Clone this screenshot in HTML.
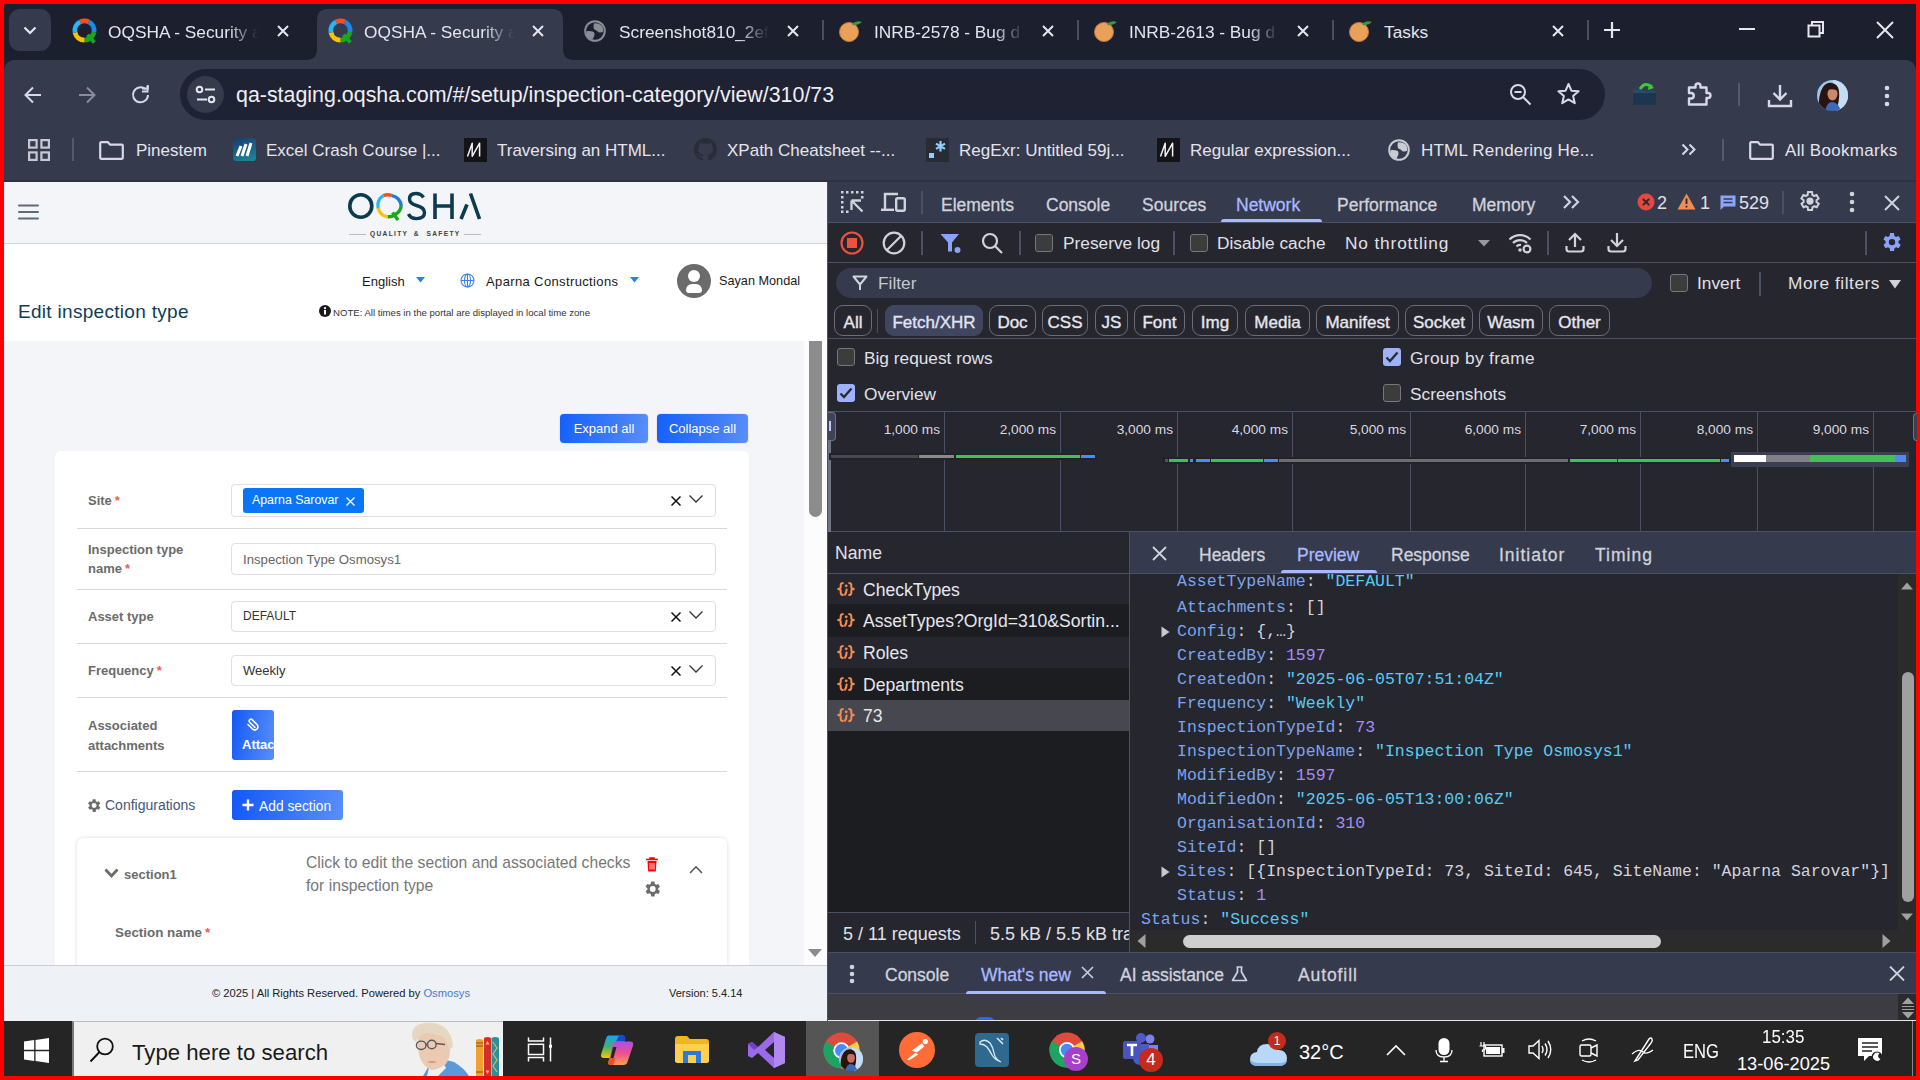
<!DOCTYPE html>
<html><head><meta charset="utf-8">
<style>
*{margin:0;padding:0;box-sizing:border-box}
html,body{width:1920px;height:1080px;overflow:hidden;background:#ff0000;font-family:"Liberation Sans",sans-serif}
.a{position:absolute}
.nw{white-space:nowrap}
#tabs{left:4px;top:4px;width:1912px;height:70px;background:#1c1f2e}
#toolbar{left:4px;top:60px;width:1912px;height:120px;background:#363a4d;border-radius:10px 10px 0 0}
.tt{color:#e4e4ec;font-size:17.3px;top:22px}
.fade{-webkit-mask-image:linear-gradient(to right,#000 80%,transparent 100%)}
.bm{color:#e4e4ec;font-size:17px;top:140.5px}
.btn{border-radius:4px;background:linear-gradient(100deg,#1560fb 0%,#3d7af9 60%,#5b8ff8 100%);color:#fff;font-size:13px;text-align:center;line-height:29px;box-shadow:0 0 1px rgba(0,0,0,.4)}
.lbl{font-size:13px;font-weight:bold;color:#6b6b6b;white-space:nowrap}
.req{color:#f05a5a;margin-left:3px}
.inp{border:1px solid #dde1e6;border-radius:4px;background:#fff}
.hr{left:77px;width:650px;height:1px;background:#d5d8dc}
.dt{color:#e0e0e8;font-size:17.3px}
.dtab{top:195px;font-size:17.5px;color:#d0d2dc;-webkit-text-stroke:0.3px currentColor}
.chip{top:305px;height:31px;border:1px solid #6a6c76;border-radius:9px;color:#e6e6ee;font-size:17px;text-align:center;line-height:33px;-webkit-text-stroke:0.35px currentColor}
.tl{top:421.5px;font-size:13.7px;color:#d8d8e0}
.mono{font-family:"Liberation Mono",monospace;font-size:16.5px;line-height:22px}
.k{color:#7ca4ec}.s{color:#5ccaf2}.n{color:#a68cf2}.p{color:#d4d4dc}
.tg{top:230.3px;font-size:6.6px;font-weight:bold;letter-spacing:1.34px;color:#404040}
</style></head>
<body>
<!-- ============ TAB STRIP ============ -->
<div id="tabs" class="a"></div>
<div id="toolbar" class="a"></div>

<!-- tab search button -->
<div class="a" style="left:9px;top:9px;width:42px;height:42px;border-radius:11px;background:#363a4d"></div>
<svg class="a" style="left:22px;top:22px" width="16" height="16" viewBox="0 0 16 16"><path d="M2.5 5.5 L8 11 L13.5 5.5" fill="none" stroke="#e6e6ee" stroke-width="2.2"/></svg>
<!-- active tab shape -->
<svg class="a" style="left:306px;top:9px" width="268" height="51" viewBox="0 0 268 51"><path d="M0 51 Q11 51 11 40 L11 11 Q11 0 22 0 L246 0 Q257 0 257 11 L257 40 Q257 51 268 51 Z" fill="#363a4d"/></svg>
<!-- favicons -->
<svg class="a" style="left:72px;top:18px;overflow:visible" width="25" height="25" viewBox="0 0 24 24">
 <g fill="none" stroke-width="4.6">
  <path d="M7.8 3.8 A9.3 9.3 0 0 1 16.2 3.8" stroke="#f4511e"/>
  <path d="M16.2 3.8 A9.3 9.3 0 0 1 21.1 13.5" stroke="#1e88e5"/>
  <path d="M21.1 13.5 A9.3 9.3 0 0 1 12 21.3" stroke="#1aa81a"/>
  <path d="M12 21.3 A9.3 9.3 0 0 1 2.9 14" stroke="#ffc107"/>
  <path d="M2.9 14 A9.3 9.3 0 0 1 7.8 3.8" stroke="#29b6f6"/>
 </g>
 <path d="M15 16 L21.5 23.5" stroke="#1aa81a" stroke-width="3.6"/>
</svg>
<svg class="a" style="left:328px;top:18px;overflow:visible" width="25" height="25" viewBox="0 0 24 24">
 <g fill="none" stroke-width="4.6">
  <path d="M7.8 3.8 A9.3 9.3 0 0 1 16.2 3.8" stroke="#f4511e"/>
  <path d="M16.2 3.8 A9.3 9.3 0 0 1 21.1 13.5" stroke="#1e88e5"/>
  <path d="M21.1 13.5 A9.3 9.3 0 0 1 12 21.3" stroke="#1aa81a"/>
  <path d="M12 21.3 A9.3 9.3 0 0 1 2.9 14" stroke="#ffc107"/>
  <path d="M2.9 14 A9.3 9.3 0 0 1 7.8 3.8" stroke="#29b6f6"/>
 </g>
 <path d="M15 16 L21.5 23.5" stroke="#1aa81a" stroke-width="3.6"/>
</svg>
<svg class="a" style="left:584px;top:20px" width="22" height="22" viewBox="0 0 22 22"><circle cx="11" cy="11" r="9.8" fill="none" stroke="#8a8c96" stroke-width="2"/><path d="M10 3.2Q14.5 2.8 17.5 5.2Q19.8 8 19.3 11.5Q17.2 12.8 14.5 12.2Q12.5 10.5 10.5 9.6Q8.8 7.5 10 3.2Z" fill="#8a8c96"/><path d="M2.4 11.2Q6.5 10.8 9.8 12Q11.2 14 10.2 16.3Q9 17.5 8.8 19.6Q4.3 18.6 2.6 15.2Z" fill="#8a8c96"/></svg>
<svg class="a" style="left:838px;top:19px" width="26" height="24" viewBox="0 0 26 24"><circle cx="11" cy="13" r="9.5" fill="#e8a05a"/><circle cx="11" cy="13" r="9.5" fill="none" stroke="#c77a35" stroke-width="1"/><path d="M14 5 Q18 1 24 3 Q20 7 15 6 Z" fill="#3a9a3a"/></svg><svg class="a" style="left:1093px;top:19px" width="26" height="24" viewBox="0 0 26 24"><circle cx="11" cy="13" r="9.5" fill="#e8a05a"/><circle cx="11" cy="13" r="9.5" fill="none" stroke="#c77a35" stroke-width="1"/><path d="M14 5 Q18 1 24 3 Q20 7 15 6 Z" fill="#3a9a3a"/></svg><svg class="a" style="left:1348px;top:19px" width="26" height="24" viewBox="0 0 26 24"><circle cx="11" cy="13" r="9.5" fill="#e8a05a"/><circle cx="11" cy="13" r="9.5" fill="none" stroke="#c77a35" stroke-width="1"/><path d="M14 5 Q18 1 24 3 Q20 7 15 6 Z" fill="#3a9a3a"/></svg><div class="a nw tt fade" style="left:108px;width:150px;overflow:hidden">OQSHA - Security a</div>
<div class="a nw tt fade" style="left:364px;width:150px;overflow:hidden">OQSHA - Security a</div>
<div class="a nw tt fade" style="left:619px;width:150px;overflow:hidden">Screenshot810_2ef</div>
<div class="a nw tt fade" style="left:874px;width:150px;overflow:hidden">INRB-2578 - Bug d</div>
<div class="a nw tt fade" style="left:1129px;width:150px;overflow:hidden">INRB-2613 - Bug d</div>
<div class="a nw tt" style="left:1384px;width:150px;overflow:hidden">Tasks</div>
<svg class="a" style="left:276px;top:24px" width="14" height="14" viewBox="0 0 14 14"><path d="M2 2L12 12M12 2L2 12" stroke="#e6e6ee" stroke-width="2"/></svg>
<svg class="a" style="left:531px;top:24px" width="14" height="14" viewBox="0 0 14 14"><path d="M2 2L12 12M12 2L2 12" stroke="#e6e6ee" stroke-width="2"/></svg>
<svg class="a" style="left:786px;top:24px" width="14" height="14" viewBox="0 0 14 14"><path d="M2 2L12 12M12 2L2 12" stroke="#e6e6ee" stroke-width="2"/></svg>
<svg class="a" style="left:1041px;top:24px" width="14" height="14" viewBox="0 0 14 14"><path d="M2 2L12 12M12 2L2 12" stroke="#e6e6ee" stroke-width="2"/></svg>
<svg class="a" style="left:1296px;top:24px" width="14" height="14" viewBox="0 0 14 14"><path d="M2 2L12 12M12 2L2 12" stroke="#e6e6ee" stroke-width="2"/></svg>
<svg class="a" style="left:1551px;top:24px" width="14" height="14" viewBox="0 0 14 14"><path d="M2 2L12 12M12 2L2 12" stroke="#e6e6ee" stroke-width="2"/></svg>
<div class="a" style="left:822px;top:20px;width:2px;height:20px;background:#4a4e60"></div>
<div class="a" style="left:1077px;top:20px;width:2px;height:20px;background:#4a4e60"></div>
<div class="a" style="left:1332px;top:20px;width:2px;height:20px;background:#4a4e60"></div>
<div class="a" style="left:1587px;top:20px;width:2px;height:20px;background:#4a4e60"></div>

<svg class="a" style="left:1602px;top:20px" width="20" height="20" viewBox="0 0 20 20"><path d="M10 2V18M2 10H18" stroke="#e6e6ee" stroke-width="2.2"/></svg>
<div class="a" style="left:1739px;top:28px;width:16px;height:2px;background:#e6e6ee"></div>
<svg class="a" style="left:1807px;top:20px" width="18" height="18" viewBox="0 0 18 18"><rect x="1.5" y="5.5" width="11" height="11" fill="none" stroke="#e6e6ee" stroke-width="2"/><path d="M5 5V2H16V13H13" fill="none" stroke="#e6e6ee" stroke-width="2"/></svg>
<svg class="a" style="left:1876px;top:21px" width="18" height="18" viewBox="0 0 18 18"><path d="M1 1L17 17M17 1L1 17" stroke="#e6e6ee" stroke-width="2"/></svg>


<!-- ======= TOOLBAR ======= -->
<svg class="a" style="left:23px;top:85px" width="20" height="20" viewBox="0 0 20 20"><path d="M18 10H3M10 2.5L2.5 10L10 17.5" fill="none" stroke="#d8d8e8" stroke-width="2"/></svg>
<svg class="a" style="left:77px;top:85px" width="20" height="20" viewBox="0 0 20 20"><path d="M2 10H17M10 2.5L17.5 10L10 17.5" fill="none" stroke="#8a8c9a" stroke-width="2"/></svg>
<svg class="a" style="left:131px;top:85px" width="20" height="20" viewBox="0 0 20 20"><path d="M17 10A7.5 7.5 0 1 1 14.5 4.2" fill="none" stroke="#d8d8e8" stroke-width="2"/><path d="M11 3.5H16.8V-1.5" fill="none" stroke="#d8d8e8" stroke-width="2"/><path d="M16.5 1V6.5H11" fill="none" stroke="#d8d8e8" stroke-width="2"/></svg>
<div class="a" style="left:180px;top:69px;width:1425px;height:51px;border-radius:26px;background:#1f2233"></div>
<div class="a" style="left:187px;top:76px;width:37px;height:37px;border-radius:50%;background:#363a4d"></div>
<svg class="a" style="left:195px;top:85px" width="22" height="20" viewBox="0 0 22 20"><circle cx="4.5" cy="4.5" r="2.8" fill="none" stroke="#e6e6ee" stroke-width="2"/><path d="M10 4.5H20M2 14.5H12" stroke="#e6e6ee" stroke-width="2"/><circle cx="16.5" cy="14.5" r="2.8" fill="none" stroke="#e6e6ee" stroke-width="2"/></svg>
<div class="a nw" style="left:236px;top:82.5px;font-size:21.4px;color:#eeeef4">qa-staging.oqsha.com/#/setup/inspection-category/view/310/73</div>
<svg class="a" style="left:1509px;top:83px" width="24" height="24" viewBox="0 0 24 24"><circle cx="9" cy="9" r="7" fill="none" stroke="#d8d8e8" stroke-width="2"/><path d="M5.5 9H12.5M14 14L21.5 21.5" stroke="#d8d8e8" stroke-width="2"/></svg>
<svg class="a" style="left:1556px;top:82px" width="25" height="24" viewBox="0 0 25 24"><path d="M12.5 2L15.4 8.7L22.6 9.3L17.1 14.1L18.8 21.2L12.5 17.4L6.2 21.2L7.9 14.1L2.4 9.3L9.6 8.7Z" fill="none" stroke="#d8d8e8" stroke-width="2" stroke-linejoin="round"/></svg>
<svg class="a" style="left:1631px;top:81px" width="27" height="26" viewBox="0 0 27 26"><path d="M2 8H10L12 10H24V24H2Z" fill="#2b4a6b"/><path d="M2 12H25V24H2Z" fill="#1e3550"/><path d="M9 8Q14 0 21 6" fill="none" stroke="#3cc83c" stroke-width="3"/><path d="M18 3L23 7L17 9Z" fill="#3cc83c"/></svg>
<svg class="a" style="left:1686px;top:81px" width="28" height="26" viewBox="0 0 28 26"><path d="M3 6.5H9.5V5A2.5 2.5 0 0 1 14.5 5V6.5H20.5V12H22A2.5 2.5 0 0 1 22 17H20.5V23.5H3V17.5H5.5A2.8 2.8 0 0 0 5.5 12H3Z" fill="none" stroke="#d8d8e8" stroke-width="2.4" stroke-linejoin="round"/></svg>
<div class="a" style="left:1738px;top:83px;width:2px;height:23px;background:#555a6c"></div>
<svg class="a" style="left:1767px;top:83px" width="26" height="25" viewBox="0 0 26 25"><path d="M13 2V16M6.5 10L13 16.5L19.5 10" fill="none" stroke="#d8d8e8" stroke-width="2.4"/><path d="M2 17V23H24V17" fill="none" stroke="#d8d8e8" stroke-width="2.4"/></svg>
<svg class="a" style="left:1817px;top:80px" width="31" height="31" viewBox="0 0 31 31"><defs><clipPath id="avc"><circle cx="15.5" cy="15.5" r="15.5"/></clipPath></defs><g clip-path="url(#avc)"><rect width="31" height="31" fill="#9ec4ec"/><path d="M16 0H31V31H20Z" fill="#c4dcf4"/><path d="M2 31Q1 14 6 7Q10 2 15 3Q21 4 22 11Q23 20 19 31Z" fill="#2a1410"/><ellipse cx="15.5" cy="14" rx="5" ry="6.5" fill="#c88a6a"/><path d="M10 10Q13 5 18 6Q21 8 21 11Q17 8 10 10Z" fill="#2a1410"/><path d="M8 31Q10 22 15 22Q21 22 24 31Z" fill="#3a6ab8"/></g></svg>
<svg class="a" style="left:1882px;top:84px" width="10" height="24" viewBox="0 0 10 24"><circle cx="5" cy="4" r="2.3" fill="#d8d8e8"/><circle cx="5" cy="12" r="2.3" fill="#d8d8e8"/><circle cx="5" cy="20" r="2.3" fill="#d8d8e8"/></svg>
<!-- ======= BOOKMARKS ======= -->
<svg class="a" style="left:28px;top:139px" width="22" height="22" viewBox="0 0 22 22"><g fill="none" stroke="#c8c8d4" stroke-width="2.2"><rect x="1.1" y="1.1" width="7.5" height="7.5"/><rect x="13.4" y="1.1" width="7.5" height="7.5"/><rect x="1.1" y="13.4" width="7.5" height="7.5"/><rect x="13.4" y="13.4" width="7.5" height="7.5"/></g></svg>
<div class="a" style="left:72px;top:138px;width:2px;height:23px;background:#555a6c"></div>
<svg class="a" style="left:99px;top:141px" width="25" height="19" viewBox="0 0 25 19"><path d="M1.2 2.2A1 1 0 0 1 2.2 1.2H9L11 3.6H22.8A1 1 0 0 1 23.8 4.6V16.8A1 1 0 0 1 22.8 17.8H2.2A1 1 0 0 1 1.2 16.8Z" fill="none" stroke="#d8d8e8" stroke-width="2.2" stroke-linejoin="round"/></svg>
<div class="a nw bm" style="left:136px">Pinestem</div>
<div class="a" style="left:233px;top:138px;width:23px;height:23px;border-radius:3px;background:linear-gradient(160deg,#1a3a6a,#1a8aa0)"></div><svg class="a" style="left:233px;top:138px" width="23" height="23" viewBox="0 0 23 23"><path d="M4 18L8 8M9 18L13 6M14 18L18 5" stroke="#fff" stroke-width="3"/></svg>
<div class="a nw bm" style="left:266px">Excel Crash Course |...</div>
<svg class="a" style="left:464px;top:138px" width="23" height="24" viewBox="0 0 23 24"><rect width="23" height="24" fill="#141418"/><path d="M3.5 18.5L8.2 5.2V18.3L15.6 5.2V18.5" fill="none" stroke="#f2f2f2" stroke-width="1.5" stroke-linejoin="round"/></svg>
<div class="a nw bm" style="left:497px">Traversing an HTML...</div>
<svg class="a" style="left:694px;top:138px" width="23" height="23" viewBox="0 0 16 16"><path fill="#2a2d38" d="M8 0C3.58 0 0 3.58 0 8c0 3.54 2.29 6.53 5.47 7.59.4.07.55-.17.55-.38 0-.19-.01-.82-.01-1.49-2.01.37-2.53-.49-2.69-.94-.09-.23-.48-.94-.82-1.13-.28-.15-.68-.52-.01-.53.63-.01 1.08.58 1.23.82.72 1.21 1.87.87 2.33.66.07-.52.28-.87.51-1.07-1.78-.2-3.64-.89-3.64-3.95 0-.87.31-1.59.82-2.15-.08-.2-.36-1.02.08-2.12 0 0 .67-.21 2.2.82.64-.18 1.32-.27 2-.27.68 0 1.36.09 2 .27 1.53-1.04 2.2-.82 2.2-.82.44 1.1.16 1.92.08 2.12.51.56.82 1.27.82 2.15 0 3.07-1.87 3.75-3.65 3.95.29.25.54.73.54 1.48 0 1.07-.01 1.93-.01 2.2 0 .21.15.46.55.38A8.013 8.013 0 0016 8c0-4.42-3.58-8-8-8z"/></svg>
<div class="a nw bm" style="left:727px">XPath Cheatsheet --...</div>
<svg class="a" style="left:926px;top:138px" width="23" height="24" viewBox="0 0 23 24"><rect width="23" height="24" fill="#282c34"/><rect x="3" y="15" width="5" height="5" fill="#90d0ff"/><path d="M14.5 3V13.5M10 5.6L19 10.9M19 5.6L10 10.9" stroke="#90d0ff" stroke-width="2.2"/></svg>
<div class="a nw bm" style="left:959px">RegExr: Untitled 59j...</div>
<svg class="a" style="left:1157px;top:138px" width="23" height="24" viewBox="0 0 23 24"><rect width="23" height="24" fill="#141418"/><path d="M3.5 18.5L8.2 5.2V18.3L15.6 5.2V18.5" fill="none" stroke="#f2f2f2" stroke-width="1.5" stroke-linejoin="round"/></svg>
<div class="a nw bm" style="left:1190px">Regular expression...</div>
<svg class="a" style="left:1388px;top:139px" width="22" height="22" viewBox="0 0 22 22"><circle cx="11" cy="11" r="9.8" fill="none" stroke="#c8ccd4" stroke-width="2"/><path d="M10 3.2Q14.5 2.8 17.5 5.2Q19.8 8 19.3 11.5Q17.2 12.8 14.5 12.2Q12.5 10.5 10.5 9.6Q8.8 7.5 10 3.2Z" fill="#c8ccd4"/><path d="M2.4 11.2Q6.5 10.8 9.8 12Q11.2 14 10.2 16.3Q9 17.5 8.8 19.6Q4.3 18.6 2.6 15.2Z" fill="#c8ccd4"/></svg>
<div class="a nw bm" style="left:1421px;letter-spacing:0.2px">HTML Rendering He...</div>
<svg class="a" style="left:1681px;top:143px" width="16" height="13" viewBox="0 0 16 13"><path d="M1.5 1.5L6.5 6.5L1.5 11.5M8.5 1.5L13.5 6.5L8.5 11.5" fill="none" stroke="#d8d8e8" stroke-width="2"/></svg>
<div class="a" style="left:1722px;top:139px;width:2px;height:22px;background:#555a6c"></div>
<svg class="a" style="left:1749px;top:141px" width="25" height="19" viewBox="0 0 25 19"><path d="M1.2 2.2A1 1 0 0 1 2.2 1.2H9L11 3.6H22.8A1 1 0 0 1 23.8 4.6V16.8A1 1 0 0 1 22.8 17.8H2.2A1 1 0 0 1 1.2 16.8Z" fill="none" stroke="#d8d8e8" stroke-width="2.2" stroke-linejoin="round"/></svg>
<div class="a nw bm" style="left:1785px;letter-spacing:0.3px">All Bookmarks</div>
<div class="a" style="left:4px;top:180px;width:1912px;height:2px;background:#2e3142"></div>

<!-- ============ APP ============ -->
<div id="app" class="a" style="left:4px;top:182px;width:823px;height:839px;background:#f3f5f9;overflow:hidden">
</div>
<!-- app content in page coords -->
<div class="a" style="left:4px;top:243px;width:823px;height:1px;background:#cfd5dc"></div>
<div class="a" style="left:4px;top:244px;width:823px;height:97px;background:#fff"></div>
<svg class="a" style="left:18px;top:204px" width="21" height="16" viewBox="0 0 21 16"><path d="M1 1.5H20M1 8H20M1 14.5H20" stroke="#5f6b78" stroke-width="2" stroke-linecap="round"/></svg>
<!-- logo -->
<svg class="a" style="left:346px;top:190px" width="138" height="34" viewBox="0 0 138 34">
 <ellipse cx="14.8" cy="16" rx="11" ry="11.2" fill="none" stroke="#0c3a4e" stroke-width="3.6"/>
 <g fill="none" stroke-width="3.4">
  <path d="M37.3 5.6 A11.2 11.2 0 0 1 46 5.6" stroke="#f4511e"/>
  <path d="M46 5.6 A11.2 11.2 0 0 1 55.2 16" stroke="#1e7be0"/>
  <path d="M55.2 16 A11.2 11.2 0 0 1 49 24.6" stroke="#18a818"/>
  <path d="M49 24.6 A11.2 11.2 0 0 1 41.6 26.8" stroke="#18a818"/>
  <path d="M41.6 26.8 A11.2 11.2 0 0 1 32.2 18" stroke="#ffc107"/>
  <path d="M32.2 18 A11.2 11.2 0 0 1 37.3 5.6" stroke="#29b6f6"/>
 </g>
 <path d="M46.5 22.5 L52 30" stroke="#18a818" stroke-width="3.4"/>
 <path d="M77.5 7.5 Q75 3.5 70 3.5 Q63.5 3.5 63.5 9 Q63.5 13.5 70.5 15.5 Q78.5 17.5 78.5 22.5 Q78.5 28.6 70.5 28.6 Q64.5 28.6 62.5 24" fill="none" stroke="#0c3a4e" stroke-width="3.4"/>
 <path d="M89 3.5V29M106 3.5V29M89 16H106" stroke="#0c3a4e" stroke-width="3.6"/>
 <path d="M124.5 3.5L133.5 29" stroke="#0c3a4e" stroke-width="3.6"/>
 <path d="M121 14.5L115 29" stroke="#0c3a4e" stroke-width="3.6"/>
</svg>
<div class="a" style="left:349px;top:234px;width:17px;height:1px;background:#b8bcc2"></div>
<div class="a" style="left:464px;top:234px;width:17px;height:1px;background:#b8bcc2"></div>
<div class="a nw tg" style="left:370px">QUALITY</div><div class="a nw tg" style="left:413.7px">&amp;</div><div class="a nw tg" style="left:426.5px">SAFETY</div>
<!-- header right -->
<div class="a nw" style="left:362px;top:274px;font-size:13px;color:#1a1a1a">English</div>
<svg class="a" style="left:416px;top:277px" width="9" height="6" viewBox="0 0 9 6"><path d="M0 0H9L4.5 5.5Z" fill="#2a80e8"/></svg>
<svg class="a" style="left:460px;top:273px" width="15" height="15" viewBox="0 0 15 15"><g fill="none" stroke="#3b82e8" stroke-width="1.1"><circle cx="7.5" cy="7.5" r="6.5"/><ellipse cx="7.5" cy="7.5" rx="3" ry="6.5"/><path d="M1 7.5H14M7.5 1V14"/></g></svg>
<div class="a nw" style="left:486px;top:274px;font-size:13px;letter-spacing:0.37px;color:#1a1a1a">Aparna Constructions</div>
<svg class="a" style="left:630px;top:277px" width="9" height="6" viewBox="0 0 9 6"><path d="M0 0H9L4.5 5.5Z" fill="#2a80e8"/></svg>
<div class="a" style="left:677px;top:264px;width:34px;height:34px;border-radius:50%;background:#6b6b6b"></div>
<div class="a" style="left:688px;top:270px;width:12px;height:12px;border-radius:50%;background:#fff"></div>
<div class="a" style="left:686px;top:284px;width:16px;height:9px;border-radius:6px 6px 3px 3px;background:#fff"></div>
<div class="a nw" style="left:719px;top:273.7px;font-size:12.7px;color:#1a1a1a">Sayan Mondal</div>
<div class="a nw" style="left:18px;top:301px;font-size:19px;letter-spacing:0.3px;color:#0d3d56">Edit inspection type</div>
<svg class="a" style="left:319px;top:305px" width="12" height="12" viewBox="0 0 12 12"><circle cx="6" cy="6" r="6" fill="#1a1a1a"/><rect x="5" y="5" width="2" height="4.5" fill="#fff"/><circle cx="6" cy="3.2" r="1.1" fill="#fff"/></svg>
<div class="a nw" style="left:333px;top:307px;font-size:9.6px;color:#333">NOTE: All times in the portal are displayed in local time zone</div>
<!-- scrollbar -->
<div class="a" style="left:804px;top:341px;width:23px;height:624px;background:#fcfcfc"></div>
<div class="a" style="left:809px;top:341px;width:13px;height:176px;border-radius:0 0 7px 7px;background:#8c8c8c"></div>
<svg class="a" style="left:808px;top:949px" width="14" height="9" viewBox="0 0 14 9"><path d="M0 0H14L7 8Z" fill="#8c8c8c"/></svg>
<!-- buttons -->
<div class="a btn" style="left:560px;top:414px;width:88px;height:29px">Expand all</div>
<div class="a btn" style="left:657px;top:414px;width:91px;height:29px">Collapse all</div>
<!-- card -->
<div class="a" style="left:55px;top:451px;width:694px;height:520px;border-radius:6px;background:#fff"></div>
<div class="a lbl" style="left:88px;top:493px">Site<span class="req">*</span></div>
<div class="a inp" style="left:231px;top:484px;width:485px;height:33px"></div>
<div class="a" style="left:243px;top:488px;width:121px;height:25px;border-radius:3px;background:#0a76f6"></div>
<div class="a nw" style="left:252px;top:493px;font-size:12.35px;color:#fff">Aparna Sarovar</div>
<svg class="a" style="left:346px;top:497px" width="9" height="9" viewBox="0 0 9 9"><path d="M0.5 0.5L8.5 8.5M8.5 0.5L0.5 8.5" stroke="#fff" stroke-width="1.3"/></svg>
<svg class="a" style="left:671px;top:496px" width="10" height="10" viewBox="0 0 10 10"><path d="M0.5 0.5L9.5 9.5M9.5 0.5L0.5 9.5" stroke="#111" stroke-width="1.5"/></svg>
<svg class="a" style="left:689px;top:495px" width="14" height="8" viewBox="0 0 14 8"><path d="M0.5 0.5L7 7L13.5 0.5" fill="none" stroke="#333" stroke-width="1.3"/></svg>
<div class="a hr" style="top:528px"></div>
<div class="a lbl" style="left:88px;top:541px;line-height:18.6px">Inspection type<br>name<span class="req">*</span></div>
<div class="a inp" style="left:231px;top:543px;width:485px;height:32px"></div>
<div class="a nw" style="left:243px;top:552px;font-size:13.2px;color:#666">Inspection Type Osmosys1</div>
<div class="a hr" style="top:589px"></div>
<div class="a lbl" style="left:88px;top:609px">Asset type</div>
<div class="a inp" style="left:231px;top:601px;width:485px;height:31px"></div>
<div class="a nw" style="left:243px;top:609px;font-size:12px;color:#333">DEFAULT</div>
<svg class="a" style="left:671px;top:612px" width="10" height="10" viewBox="0 0 10 10"><path d="M0.5 0.5L9.5 9.5M9.5 0.5L0.5 9.5" stroke="#111" stroke-width="1.5"/></svg>
<svg class="a" style="left:689px;top:611px" width="14" height="8" viewBox="0 0 14 8"><path d="M0.5 0.5L7 7L13.5 0.5" fill="none" stroke="#333" stroke-width="1.3"/></svg>
<div class="a hr" style="top:643px"></div>
<div class="a lbl" style="left:88px;top:663px">Frequency<span class="req">*</span></div>
<div class="a inp" style="left:231px;top:655px;width:485px;height:31px"></div>
<div class="a nw" style="left:243px;top:663px;font-size:13px;color:#333">Weekly</div>
<svg class="a" style="left:671px;top:666px" width="10" height="10" viewBox="0 0 10 10"><path d="M0.5 0.5L9.5 9.5M9.5 0.5L0.5 9.5" stroke="#111" stroke-width="1.5"/></svg>
<svg class="a" style="left:689px;top:665px" width="14" height="8" viewBox="0 0 14 8"><path d="M0.5 0.5L7 7L13.5 0.5" fill="none" stroke="#333" stroke-width="1.3"/></svg>
<div class="a hr" style="top:697px"></div>
<div class="a lbl" style="left:88px;top:716px;line-height:20.4px">Associated<br>attachments</div>
<div class="a" style="left:232px;top:710px;width:42px;height:50px;border-radius:3px;background:linear-gradient(100deg,#1258f8,#5a8ff8);overflow:hidden">
 <svg class="a" style="left:14px;top:8px;transform:scaleX(-1)" width="13" height="13" viewBox="0 0 13 13"><path d="M4 9.5L9.5 4A1.8 1.8 0 0 0 7 1.5L2 6.5A3 3 0 0 0 6.5 11L11 6.5" fill="none" stroke="#fff" stroke-width="1.6" stroke-linecap="round"/></svg>
 <div class="a nw" style="left:10px;top:27px;font-size:13px;font-weight:bold;color:#fff">Attach</div>
</div>
<div class="a hr" style="top:771px"></div>
<svg class="a" style="left:85px;top:797px" width="17" height="17" viewBox="0 0 24 24"><path fill="#6b6b6b" d="M19.4 13a7.6 7.6 0 0 0 0-2l2.1-1.6-2-3.5-2.5 1a7.4 7.4 0 0 0-1.7-1L14.9 3h-4l-.4 2.9a7.4 7.4 0 0 0-1.7 1l-2.5-1-2 3.5L6.5 11a7.6 7.6 0 0 0 0 2l-2.1 1.6 2 3.5 2.5-1a7.4 7.4 0 0 0 1.7 1l.4 2.9h4l.4-2.9a7.4 7.4 0 0 0 1.7-1l2.5 1 2-3.5zM12.9 15.5a3.5 3.5 0 1 1 0-7 3.5 3.5 0 0 1 0 7z"/></svg>
<div class="a nw" style="left:105px;top:797px;font-size:14px;color:#44577a">Configurations</div>
<div class="a" style="left:232px;top:790px;width:111px;height:30px;border-radius:3px;background:linear-gradient(100deg,#1258f8,#5a8ff8)"></div>
<svg class="a" style="left:242px;top:799px" width="12" height="12" viewBox="0 0 12 12"><path d="M6 0.5V11.5M0.5 6H11.5" stroke="#fff" stroke-width="2.4"/></svg>
<div class="a nw" style="left:259px;top:798.5px;font-size:13.8px;color:#fff">Add section</div>
<!-- section card -->
<div class="a" style="left:77px;top:838px;width:650px;height:200px;border-radius:6px;background:#fff;box-shadow:0 0 4px rgba(0,0,0,0.14)"></div>
<svg class="a" style="left:104px;top:868px" width="15" height="11" viewBox="0 0 15 11"><path d="M1.5 1.5L7.5 8L13.5 1.5" fill="none" stroke="#6b6b6b" stroke-width="2.8"/></svg>
<div class="a nw" style="left:124px;top:867px;font-size:13px;font-weight:bold;color:#6b6b6b">section1</div>
<div class="a nw" style="left:306px;top:851px;font-size:15.7px;line-height:23px;color:#777">Click to edit the section and associated checks<br>for inspection type</div>
<svg class="a" style="left:645px;top:857px" width="14" height="15" viewBox="0 0 14 15"><path d="M1 2.5H13M5 2.5V1H9V2.5" fill="none" stroke="#f00" stroke-width="1.6"/><path d="M2.5 4H11.5L10.8 14.5H3.2Z" fill="#f00"/><path d="M5 6V12.5M7 6V12.5M9 6V12.5" stroke="#fff" stroke-width="0.9"/></svg>
<svg class="a" style="left:642px;top:879px" width="20" height="20" viewBox="0 0 24 24"><path fill="#6b6b6b" d="M19.4 13a7.6 7.6 0 0 0 0-2l2.1-1.6-2-3.5-2.5 1a7.4 7.4 0 0 0-1.7-1L14.9 3h-4l-.4 2.9a7.4 7.4 0 0 0-1.7 1l-2.5-1-2 3.5L6.5 11a7.6 7.6 0 0 0 0 2l-2.1 1.6 2 3.5 2.5-1a7.4 7.4 0 0 0 1.7 1l.4 2.9h4l.4-2.9a7.4 7.4 0 0 0 1.7-1l2.5 1 2-3.5zM12.9 15.5a3.5 3.5 0 1 1 0-7 3.5 3.5 0 0 1 0 7z"/></svg>
<svg class="a" style="left:689px;top:865px" width="14" height="9" viewBox="0 0 14 9"><path d="M1 8L7 1.8L13 8" fill="none" stroke="#555" stroke-width="1.6"/></svg>
<div class="a nw" style="left:115px;top:925px;font-size:13.4px;font-weight:bold;color:#6b6b6b">Section name<span class="req">*</span></div>
<!-- footer -->
<div class="a" style="left:4px;top:965px;width:823px;height:56px;background:#eef1f5;border-top:1px solid #c9d0d8"></div>
<div class="a nw" style="left:212px;top:987px;font-size:11.2px;color:#222">© 2025 | All Rights Reserved. Powered by <span style="color:#4a7ad0">Osmosys</span></div>
<div class="a nw" style="left:669px;top:987px;font-size:11px;color:#222">Version: 5.4.14</div>


<!-- ============ DEVTOOLS ============ -->
<div id="dt" class="a" style="left:827px;top:182px;width:1089px;height:839px;background:#26262e;overflow:hidden"></div>
<div class="a" style="left:827px;top:182px;width:1px;height:839px;background:#4a4f62"></div>
<div class="a" style="left:828px;top:182px;width:1088px;height:40px;background:#353a4d"></div>
<div class="a" style="left:828px;top:222px;width:1088px;height:1px;background:#4b5066"></div>
<div class="a" style="left:828px;top:223px;width:1088px;height:39px;background:#26262e"></div>
<div class="a" style="left:828px;top:262px;width:1088px;height:1px;background:#4b5066"></div>
<div class="a" style="left:828px;top:263px;width:1088px;height:75px;background:#26262e"></div>
<div class="a" style="left:828px;top:338px;width:1088px;height:1px;background:#4b5066"></div>
<div class="a" style="left:828px;top:339px;width:1088px;height:72px;background:#26262e"></div>
<div class="a" style="left:828px;top:411px;width:1088px;height:1px;background:#4b5066"></div>
<div class="a" style="left:828px;top:412px;width:1088px;height:120px;background:#26262e"></div>
<div class="a" style="left:828px;top:531px;width:1088px;height:1px;background:#4b5066"></div>
<svg class="a" style="left:841px;top:191px" width="23" height="22" viewBox="0 0 23 22"><g fill="#d0d2dc"><rect x="0" y="0" width="2.5" height="2.5"/><rect x="5" y="0" width="2.5" height="2.5"/><rect x="10" y="0" width="2.5" height="2.5"/><rect x="15" y="0" width="2.5" height="2.5"/><rect x="20" y="0" width="2.5" height="2.5"/><rect x="0" y="5" width="2.5" height="2.5"/><rect x="20" y="5" width="2.5" height="2.5"/><rect x="0" y="10" width="2.5" height="2.5"/><rect x="0" y="15" width="2.5" height="2.5"/><rect x="0" y="19.5" width="2.5" height="2.5"/><rect x="5" y="19.5" width="2.5" height="2.5"/></g><path d="M21.5 20.5L11 10M10.5 9.5V19M10.5 9.5H20" fill="none" stroke="#d0d2dc" stroke-width="2.3"/></svg>
<svg class="a" style="left:881px;top:192px" width="26" height="20" viewBox="0 0 26 20"><path d="M4 17V2H17" fill="none" stroke="#d0d2dc" stroke-width="2.4"/><path d="M0 17.8H13" stroke="#d0d2dc" stroke-width="2.4"/><rect x="15.2" y="6.2" width="8.6" height="12.6" rx="1.5" fill="none" stroke="#d0d2dc" stroke-width="2.4"/></svg>
<div class="a" style="left:921px;top:191px;width:2px;height:23px;background:#4b5066"></div>
<div class="a nw dtab" style="left:941px;color:#d0d2dc">Elements</div>
<div class="a nw dtab" style="left:1046px;color:#d0d2dc">Console</div>
<div class="a nw dtab" style="left:1142px;color:#d0d2dc">Sources</div>
<div class="a nw dtab" style="left:1236px;color:#a9b9ff">Network</div>
<div class="a nw dtab" style="left:1337px;color:#d0d2dc">Performance</div>
<div class="a nw dtab" style="left:1472px;color:#d0d2dc">Memory</div>
<div class="a" style="left:1221px;top:219px;width:101px;height:3px;border-radius:3px 3px 0 0;background:#a9b9ff"></div>
<svg class="a" style="left:1562px;top:194px" width="20" height="16" viewBox="0 0 20 16"><path d="M2 2L8 8L2 14M10 2L16 8L10 14" fill="none" stroke="#d0d2dc" stroke-width="2.2"/></svg>
<svg class="a" style="left:1637px;top:193px" width="18" height="18" viewBox="0 0 18 18"><circle cx="9" cy="9" r="8.5" fill="#e5483c"/><path d="M5.8 5.8L12.2 12.2M12.2 5.8L5.8 12.2" stroke="#26262e" stroke-width="1.9"/></svg>
<div class="a nw dt" style="left:1657px;top:192.5px;font-size:18px">2</div>
<svg class="a" style="left:1677px;top:193px" width="19" height="17" viewBox="0 0 19 17"><path d="M9.5 0.5L18.5 16.5H0.5Z" fill="#f28c52"/><path d="M9.5 5.5V11M9.5 12.8V14.6" stroke="#26262e" stroke-width="1.8"/></svg>
<div class="a nw dt" style="left:1700px;top:192.5px;font-size:18px">1</div>
<svg class="a" style="left:1720px;top:195px" width="16" height="16" viewBox="0 0 16 16"><path d="M0.5 0.5H15.5V11.5H4L0.5 15Z" fill="#8ca6f6"/><path d="M3.5 4H12.5M3.5 7.5H12.5" stroke="#353a4d" stroke-width="1.3"/></svg>
<div class="a nw dt" style="left:1739px;top:192.5px;font-size:18px">529</div>
<div class="a" style="left:1782px;top:191px;width:2px;height:23px;background:#4b5066"></div>
<svg class="a" style="left:1797px;top:189px" width="26" height="26" viewBox="0 0 26 26"><path transform="translate(0.1 0.1)" d="M19.4 13a7.6 7.6 0 0 0 0-2l2.1-1.6-2-3.5-2.5 1a7.4 7.4 0 0 0-1.7-1L14.9 3h-4l-.4 2.9a7.4 7.4 0 0 0-1.7 1l-2.5-1-2 3.5L6.5 11a7.6 7.6 0 0 0 0 2l-2.1 1.6 2 3.5 2.5-1a7.4 7.4 0 0 0 1.7 1l.4 2.9h4l.4-2.9a7.4 7.4 0 0 0 1.7-1l2.5 1 2-3.5z" fill="none" stroke="#d0d2dc" stroke-width="2"/><circle cx="13" cy="12.1" r="3.6" fill="#d0d2dc"/></svg>
<svg class="a" style="left:1847px;top:191px" width="10" height="22" viewBox="0 0 10 22"><circle cx="5" cy="3" r="2.3" fill="#d0d2dc"/><circle cx="5" cy="11" r="2.3" fill="#d0d2dc"/><circle cx="5" cy="19" r="2.3" fill="#d0d2dc"/></svg>
<svg class="a" style="left:1884px;top:195px" width="16" height="16" viewBox="0 0 16 16"><path d="M1 1L15 15M15 1L1 15" stroke="#d0d2dc" stroke-width="2"/></svg>
<svg class="a" style="left:840px;top:231px" width="24" height="24" viewBox="0 0 24 24"><circle cx="12" cy="12" r="10.5" fill="none" stroke="#f0503f" stroke-width="2.2"/><rect x="7" y="7" width="10" height="10" fill="#f0503f"/></svg>
<svg class="a" style="left:882px;top:231px" width="24" height="24" viewBox="0 0 24 24"><circle cx="12" cy="12" r="10.3" fill="none" stroke="#d0d2dc" stroke-width="2.2"/><path d="M19 5L5 19" stroke="#d0d2dc" stroke-width="2.2"/></svg>
<div class="a" style="left:921px;top:231px;width:2px;height:24px;background:#4b5066"></div>
<svg class="a" style="left:940px;top:233px" width="22" height="21" viewBox="0 0 22 21"><path d="M0.5 1H19L12 9.5V18.5H8V9.5Z" fill="#8aa4f4"/><circle cx="17.5" cy="17" r="3" fill="#8aa4f4"/></svg>
<svg class="a" style="left:981px;top:232px" width="22" height="22" viewBox="0 0 22 22"><circle cx="9" cy="9" r="7" fill="none" stroke="#d0d2dc" stroke-width="2.2"/><path d="M14 14L21 21" stroke="#d0d2dc" stroke-width="2.2"/></svg>
<div class="a" style="left:1019px;top:231px;width:2px;height:24px;background:#4b5066"></div>
<div class="a" style="left:1035px;top:234px;width:18px;height:18px;border-radius:3px;background:#3c3c3c;border:1.5px solid #76767c"></div>
<div class="a nw dt" style="left:1063px;top:233px">Preserve log</div>
<div class="a" style="left:1173px;top:231px;width:2px;height:24px;background:#4b5066"></div>
<div class="a" style="left:1190px;top:234px;width:18px;height:18px;border-radius:3px;background:#3c3c3c;border:1.5px solid #76767c"></div>
<div class="a nw dt" style="left:1217px;top:233px">Disable cache</div>
<div class="a nw dt" style="left:1345px;top:233px;letter-spacing:0.85px">No throttling</div>
<svg class="a" style="left:1478px;top:240px" width="12" height="7" viewBox="0 0 12 7"><path d="M0 0H12L6 6.5Z" fill="#98989e"/></svg>
<svg class="a" style="left:1508px;top:232px" width="25" height="22" viewBox="0 0 25 22"><path d="M1.5 7.5A15 15 0 0 1 22.5 7.5M5 11A10 10 0 0 1 19 11M8.5 14.5A5 5 0 0 1 13 13" fill="none" stroke="#d0d2dc" stroke-width="2.2"/><circle cx="12" cy="18" r="1.8" fill="#d0d2dc"/><circle cx="19" cy="17" r="3.4" fill="none" stroke="#d0d2dc" stroke-width="2.2"/></svg>
<div class="a" style="left:1547px;top:231px;width:2px;height:24px;background:#4b5066"></div>
<svg class="a" style="left:1565px;top:232px" width="20" height="21" viewBox="0 0 20 21"><path d="M10 15V2M4 8L10 2L16 8M1.5 14V17A2.5 2.5 0 0 0 4 19.5H16A2.5 2.5 0 0 0 18.5 17V14" fill="none" stroke="#d0d2dc" stroke-width="2.2"/></svg>
<svg class="a" style="left:1607px;top:232px" width="20" height="21" viewBox="0 0 20 21"><path d="M10 1V14M4 8L10 14L16 8M1.5 14V17A2.5 2.5 0 0 0 4 19.5H16A2.5 2.5 0 0 0 18.5 17V14" fill="none" stroke="#d0d2dc" stroke-width="2.2"/></svg>
<div class="a" style="left:1865px;top:231px;width:2px;height:24px;background:#4b5066"></div>
<svg class="a" style="left:1879px;top:230px" width="26" height="26" viewBox="0 0 26 26"><path transform="translate(0.1 0.1)" d="M19.4 13a7.6 7.6 0 0 0 0-2l2.1-1.6-2-3.5-2.5 1a7.4 7.4 0 0 0-1.7-1L14.9 3h-4l-.4 2.9a7.4 7.4 0 0 0-1.7 1l-2.5-1-2 3.5L6.5 11a7.6 7.6 0 0 0 0 2l-2.1 1.6 2 3.5 2.5-1a7.4 7.4 0 0 0 1.7 1l.4 2.9h4l.4-2.9a7.4 7.4 0 0 0 1.7-1l2.5 1 2-3.5z" fill="#8ca2f4"/><circle cx="13" cy="12.1" r="3.2" fill="#26262e"/></svg>
<div class="a" style="left:836px;top:268px;width:816px;height:30px;border-radius:15px;background:#363a4d"></div>
<svg class="a" style="left:852px;top:275px" width="16" height="16" viewBox="0 0 16 16"><path d="M1.5 1.5H14.5L8 9.5ZM8 9.5V15" fill="none" stroke="#d0d2dc" stroke-width="2" stroke-linejoin="round"/></svg>
<div class="a nw dt" style="left:878px;top:273px;color:#c8c8d0">Filter</div>
<div class="a" style="left:1670px;top:274px;width:18px;height:18px;border-radius:3px;background:#3c3c3c;border:1.5px solid #76767c"></div>
<div class="a nw dt" style="left:1697px;top:273px">Invert</div>
<div class="a" style="left:1759px;top:272px;width:2px;height:24px;background:#4b5066"></div>
<div class="a nw dt" style="left:1788px;top:273px;letter-spacing:0.55px">More filters</div>
<svg class="a" style="left:1889px;top:280px" width="12" height="9" viewBox="0 0 12 9"><path d="M0 0H12L6 8.5Z" fill="#d0d2dc"/></svg>
<div class="a nw chip" style="left:834px;width:38px">All</div>
<div class="a nw chip" style="left:885px;width:98px;background:#414660;border-color:#414660;color:#e0e4f8">Fetch/XHR</div>
<div class="a nw chip" style="left:989px;width:47px">Doc</div>
<div class="a nw chip" style="left:1042px;width:46px">CSS</div>
<div class="a nw chip" style="left:1095px;width:33px">JS</div>
<div class="a nw chip" style="left:1134px;width:51px">Font</div>
<div class="a nw chip" style="left:1192px;width:46px">Img</div>
<div class="a nw chip" style="left:1245px;width:65px">Media</div>
<div class="a nw chip" style="left:1316px;width:83px">Manifest</div>
<div class="a nw chip" style="left:1405px;width:68px">Socket</div>
<div class="a nw chip" style="left:1479px;width:64px">Wasm</div>
<div class="a nw chip" style="left:1549px;width:61px">Other</div>
<div class="a" style="left:877px;top:309px;width:1px;height:24px;background:#4b5066"></div>
<div class="a" style="left:837px;top:348px;width:18px;height:18px;border-radius:3px;background:#3c3c3c;border:1.5px solid #76767c"></div>
<div class="a nw dt" style="left:864px;top:348px">Big request rows</div>
<div class="a" style="left:837px;top:384px;width:18px;height:18px;border-radius:3px;background:#9db2f8"></div><svg class="a" style="left:837px;top:384px" width="18" height="18" viewBox="0 0 18 18"><path d="M3.5 9.5L7 13L14.5 4.5" fill="none" stroke="#2a2a32" stroke-width="2.3"/></svg>
<div class="a nw dt" style="left:864px;top:384px">Overview</div>
<div class="a" style="left:1383px;top:348px;width:18px;height:18px;border-radius:3px;background:#9db2f8"></div><svg class="a" style="left:1383px;top:348px" width="18" height="18" viewBox="0 0 18 18"><path d="M3.5 9.5L7 13L14.5 4.5" fill="none" stroke="#2a2a32" stroke-width="2.3"/></svg>
<div class="a nw dt" style="left:1410px;top:348px;letter-spacing:0.35px">Group by frame</div>
<div class="a" style="left:1383px;top:384px;width:18px;height:18px;border-radius:3px;background:#3c3c3c;border:1.5px solid #76767c"></div>
<div class="a nw dt" style="left:1410px;top:384px">Screenshots</div>
<div class="a" style="left:944px;top:412px;width:1px;height:120px;background:#4b5066"></div>
<div class="a nw tl" style="left:840px;width:100px;text-align:right">1,000 ms</div>
<div class="a" style="left:1060px;top:412px;width:1px;height:120px;background:#4b5066"></div>
<div class="a nw tl" style="left:956px;width:100px;text-align:right">2,000 ms</div>
<div class="a" style="left:1177px;top:412px;width:1px;height:120px;background:#4b5066"></div>
<div class="a nw tl" style="left:1073px;width:100px;text-align:right">3,000 ms</div>
<div class="a" style="left:1292px;top:412px;width:1px;height:120px;background:#4b5066"></div>
<div class="a nw tl" style="left:1188px;width:100px;text-align:right">4,000 ms</div>
<div class="a" style="left:1410px;top:412px;width:1px;height:120px;background:#4b5066"></div>
<div class="a nw tl" style="left:1306px;width:100px;text-align:right">5,000 ms</div>
<div class="a" style="left:1525px;top:412px;width:1px;height:120px;background:#4b5066"></div>
<div class="a nw tl" style="left:1421px;width:100px;text-align:right">6,000 ms</div>
<div class="a" style="left:1640px;top:412px;width:1px;height:120px;background:#4b5066"></div>
<div class="a nw tl" style="left:1536px;width:100px;text-align:right">7,000 ms</div>
<div class="a" style="left:1757px;top:412px;width:1px;height:120px;background:#4b5066"></div>
<div class="a nw tl" style="left:1653px;width:100px;text-align:right">8,000 ms</div>
<div class="a" style="left:1873px;top:412px;width:1px;height:120px;background:#4b5066"></div>
<div class="a nw tl" style="left:1769px;width:100px;text-align:right">9,000 ms</div>
<div class="a" style="left:828px;top:440px;width:3px;height:92px;background:#6e7388"></div><div class="a" style="left:828px;top:412px;width:8px;height:29px;border-radius:0 4px 4px 0;background:#3e4358;border:1px solid #6c7188;border-left:none"></div><div class="a" style="left:829px;top:421px;width:2px;height:10px;background:#c0c8ff"></div>
<div class="a" style="left:1913px;top:413px;width:4px;height:28px;border-radius:4px 0 0 4px;background:#3a4050;border:1px solid #6c7188;border-right:none"></div>
<div class="a" style="left:829px;top:453px;width:268px;height:7px;background:#222228"></div><div class="a" style="left:1162px;top:457px;width:569px;height:7px;background:#222228"></div><div class="a" style="left:831.0px;top:455px;width:87.0px;height:3px;background:#48484e"></div>
<div class="a" style="left:919.0px;top:455px;width:35.0px;height:3px;background:#8a8a8e"></div>
<div class="a" style="left:955.5px;top:455px;width:124.5px;height:3px;background:#3ec15a"></div>
<div class="a" style="left:1081.0px;top:455px;width:14.0px;height:3px;background:#4a8cf0"></div>
<div class="a" style="left:1165.0px;top:459px;width:3.0px;height:3px;background:#2e6a40"></div>
<div class="a" style="left:1169.0px;top:459px;width:19.0px;height:3px;background:#3ec15a"></div>
<div class="a" style="left:1189.5px;top:459px;width:3.5px;height:3px;background:#4a8cf0"></div>
<div class="a" style="left:1195.5px;top:459px;width:14.0px;height:3px;background:#4a8cf0"></div>
<div class="a" style="left:1211.0px;top:459px;width:51.5px;height:3px;background:#3ec15a"></div>
<div class="a" style="left:1264.0px;top:459px;width:13.5px;height:3px;background:#4a8cf0"></div>
<div class="a" style="left:1279.0px;top:459px;width:289.0px;height:3px;background:#6e6e72"></div>
<div class="a" style="left:1570.0px;top:459px;width:47.0px;height:3px;background:#3ec15a"></div>
<div class="a" style="left:1618.0px;top:459px;width:101.5px;height:3px;background:#3ec15a"></div>
<div class="a" style="left:1721.0px;top:459px;width:8.0px;height:3px;background:#4a8cf0"></div>
<div class="a" style="left:1731px;top:452px;width:178px;height:15px;background:#3b3f52"></div>
<div class="a" style="left:1734.0px;top:455px;width:31.5px;height:7px;background:#ffffff"></div>
<div class="a" style="left:1765.5px;top:455px;width:44.5px;height:7px;background:#808086"></div>
<div class="a" style="left:1810.0px;top:455px;width:84.5px;height:7px;background:#3ec15a"></div>
<div class="a" style="left:1894.5px;top:455px;width:11.5px;height:7px;background:#4a8cf0"></div>
<div class="a" style="left:828px;top:532px;width:301px;height:41px;background:#26262e"></div>
<div class="a nw dt" style="left:835px;top:543px;font-size:17.6px">Name</div>
<div class="a" style="left:828px;top:573px;width:301px;height:1px;background:#4b5066"></div>
<div class="a" style="left:828px;top:574px;width:301px;height:338px;background:#1c1d21"></div>
<div class="a" style="left:828px;top:574px;width:301px;height:30px;background:#26262e"></div>
<svg class="a" style="left:836px;top:580px" width="20" height="18" viewBox="0 0 20 18"><path d="M7.6 2.9Q4.7 2.9 4.7 5V7.2Q4.7 9 1.4 9Q4.7 9 4.7 10.8V13Q4.7 15.1 7.6 15.1M12.4 2.9Q15.3 2.9 15.3 5V7.2Q15.3 9 18.6 9Q15.3 9 15.3 10.8V13Q15.3 15.1 12.4 15.1" fill="none" stroke="#f28b54" stroke-width="2"/><circle cx="10.2" cy="5.8" r="1.4" fill="#f28b54"/><path d="M10.6 9.6Q10.4 12.6 9 14.6" fill="none" stroke="#f28b54" stroke-width="2.1" stroke-linecap="round"/></svg>
<div class="a nw dt" style="left:863px;top:580px;font-size:17.6px;color:#e6e6ee">CheckTypes</div>
<div class="a" style="left:828px;top:604px;width:301px;height:33px;background:#1c1d21"></div>
<svg class="a" style="left:836px;top:611px" width="20" height="18" viewBox="0 0 20 18"><path d="M7.6 2.9Q4.7 2.9 4.7 5V7.2Q4.7 9 1.4 9Q4.7 9 4.7 10.8V13Q4.7 15.1 7.6 15.1M12.4 2.9Q15.3 2.9 15.3 5V7.2Q15.3 9 18.6 9Q15.3 9 15.3 10.8V13Q15.3 15.1 12.4 15.1" fill="none" stroke="#f28b54" stroke-width="2"/><circle cx="10.2" cy="5.8" r="1.4" fill="#f28b54"/><path d="M10.6 9.6Q10.4 12.6 9 14.6" fill="none" stroke="#f28b54" stroke-width="2.1" stroke-linecap="round"/></svg>
<div class="a nw dt" style="left:863px;top:611px;font-size:17.6px;color:#e6e6ee">AssetTypes?OrgId=310&amp;Sortin...</div>
<div class="a" style="left:828px;top:637px;width:301px;height:31px;background:#26262e"></div>
<svg class="a" style="left:836px;top:643px" width="20" height="18" viewBox="0 0 20 18"><path d="M7.6 2.9Q4.7 2.9 4.7 5V7.2Q4.7 9 1.4 9Q4.7 9 4.7 10.8V13Q4.7 15.1 7.6 15.1M12.4 2.9Q15.3 2.9 15.3 5V7.2Q15.3 9 18.6 9Q15.3 9 15.3 10.8V13Q15.3 15.1 12.4 15.1" fill="none" stroke="#f28b54" stroke-width="2"/><circle cx="10.2" cy="5.8" r="1.4" fill="#f28b54"/><path d="M10.6 9.6Q10.4 12.6 9 14.6" fill="none" stroke="#f28b54" stroke-width="2.1" stroke-linecap="round"/></svg>
<div class="a nw dt" style="left:863px;top:643px;font-size:17.6px;color:#e6e6ee">Roles</div>
<div class="a" style="left:828px;top:668px;width:301px;height:32px;background:#1c1d21"></div>
<svg class="a" style="left:836px;top:675px" width="20" height="18" viewBox="0 0 20 18"><path d="M7.6 2.9Q4.7 2.9 4.7 5V7.2Q4.7 9 1.4 9Q4.7 9 4.7 10.8V13Q4.7 15.1 7.6 15.1M12.4 2.9Q15.3 2.9 15.3 5V7.2Q15.3 9 18.6 9Q15.3 9 15.3 10.8V13Q15.3 15.1 12.4 15.1" fill="none" stroke="#f28b54" stroke-width="2"/><circle cx="10.2" cy="5.8" r="1.4" fill="#f28b54"/><path d="M10.6 9.6Q10.4 12.6 9 14.6" fill="none" stroke="#f28b54" stroke-width="2.1" stroke-linecap="round"/></svg>
<div class="a nw dt" style="left:863px;top:675px;font-size:17.6px;color:#e6e6ee">Departments</div>
<div class="a" style="left:828px;top:700px;width:301px;height:31px;background:#47474f"></div>
<svg class="a" style="left:836px;top:706px" width="20" height="18" viewBox="0 0 20 18"><path d="M7.6 2.9Q4.7 2.9 4.7 5V7.2Q4.7 9 1.4 9Q4.7 9 4.7 10.8V13Q4.7 15.1 7.6 15.1M12.4 2.9Q15.3 2.9 15.3 5V7.2Q15.3 9 18.6 9Q15.3 9 15.3 10.8V13Q15.3 15.1 12.4 15.1" fill="none" stroke="#f28b54" stroke-width="2"/><circle cx="10.2" cy="5.8" r="1.4" fill="#f28b54"/><path d="M10.6 9.6Q10.4 12.6 9 14.6" fill="none" stroke="#f28b54" stroke-width="2.1" stroke-linecap="round"/></svg>
<div class="a nw dt" style="left:863px;top:706px;font-size:17.6px;color:#e6e6ee">73</div>
<div class="a" style="left:1129px;top:532px;width:1px;height:420px;background:#4b5066"></div>
<div class="a" style="left:828px;top:912px;width:301px;height:1px;background:#4b5066"></div>
<div class="a" style="left:828px;top:913px;width:301px;height:39px;background:#26262e"></div>
<div class="a nw dt" style="left:843px;top:924px;font-size:18px">5 / 11 requests</div>
<div class="a" style="left:975px;top:921px;width:1px;height:23px;background:#4b5066"></div>
<div class="a nw dt" style="left:990px;top:924px;font-size:18px;width:139px;overflow:hidden">5.5 kB / 5.5 kB transferred</div>
<div class="a" style="left:1130px;top:532px;width:786px;height:41px;background:#353a4d"></div>
<div class="a" style="left:1130px;top:573px;width:786px;height:1px;background:#4b5066"></div>
<svg class="a" style="left:1152px;top:546px" width="15" height="15" viewBox="0 0 15 15"><path d="M1 1L14 14M14 1L1 14" stroke="#d0d2dc" stroke-width="1.8"/></svg>
<div class="a nw dtab" style="left:1199px;top:545px;color:#d0d2dc">Headers</div>
<div class="a nw dtab" style="left:1297px;top:545px;color:#a9b9ff">Preview</div>
<div class="a nw dtab" style="left:1391px;top:545px;color:#d0d2dc">Response</div>
<div class="a nw dtab" style="left:1499px;top:545px;color:#d0d2dc;letter-spacing:1px">Initiator</div>
<div class="a nw dtab" style="left:1595px;top:545px;color:#d0d2dc;letter-spacing:1px">Timing</div>
<div class="a" style="left:1281px;top:570px;width:96px;height:3px;border-radius:3px 3px 0 0;background:#a9b9ff"></div>
<div class="a" style="left:1130px;top:574px;width:786px;height:356px;background:#26262e"></div>
<div class="a" style="left:1130px;top:574px;width:768px;height:356px;overflow:hidden">
<div class="a nw mono" style="left:47px;top:-3.2px"><span class="k">AssetTypeName</span><span class="p">: </span><span class="s">"DEFAULT"</span></div>
<div class="a nw mono" style="left:47px;top:22.6px"><span class="k">Attachments</span><span class="p">: </span><span class="p">[]</span></div>
<div class="a nw mono" style="left:47px;top:46.6px"><span class="k">Config</span><span class="p">: </span><span class="p">{,…}</span></div>
<svg class="a" style="left:31px;top:52.3px" width="9" height="12" viewBox="0 0 9 12"><path d="M0.5 0.5L8.5 6L0.5 11.5Z" fill="#c8c8d0"/></svg>
<div class="a nw mono" style="left:47px;top:70.6px"><span class="k">CreatedBy</span><span class="p">: </span><span class="n">1597</span></div>
<div class="a nw mono" style="left:47px;top:94.6px"><span class="k">CreatedOn</span><span class="p">: </span><span class="s">"2025-06-05T07:51:04Z"</span></div>
<div class="a nw mono" style="left:47px;top:118.6px"><span class="k">Frequency</span><span class="p">: </span><span class="s">"Weekly"</span></div>
<div class="a nw mono" style="left:47px;top:142.6px"><span class="k">InspectionTypeId</span><span class="p">: </span><span class="n">73</span></div>
<div class="a nw mono" style="left:47px;top:166.6px"><span class="k">InspectionTypeName</span><span class="p">: </span><span class="s">"Inspection Type Osmosys1"</span></div>
<div class="a nw mono" style="left:47px;top:190.6px"><span class="k">ModifiedBy</span><span class="p">: </span><span class="n">1597</span></div>
<div class="a nw mono" style="left:47px;top:214.6px"><span class="k">ModifiedOn</span><span class="p">: </span><span class="s">"2025-06-05T13:00:06Z"</span></div>
<div class="a nw mono" style="left:47px;top:238.6px"><span class="k">OrganisationId</span><span class="p">: </span><span class="n">310</span></div>
<div class="a nw mono" style="left:47px;top:262.6px"><span class="k">SiteId</span><span class="p">: </span><span class="p">[]</span></div>
<div class="a nw mono" style="left:47px;top:286.6px"><span class="k">Sites</span><span class="p">: </span><span class="p">[{InspectionTypeId: 73, SiteId: 645, SiteName: "Aparna Sarovar"}]</span></div>
<svg class="a" style="left:31px;top:292.3px" width="9" height="12" viewBox="0 0 9 12"><path d="M0.5 0.5L8.5 6L0.5 11.5Z" fill="#c8c8d0"/></svg>
<div class="a nw mono" style="left:47px;top:310.6px"><span class="k">Status</span><span class="p">: </span><span class="n">1</span></div>
<div class="a nw mono" style="left:11px;top:334.6px"><span class="k">Status</span><span class="p">: </span><span class="s">"Success"</span></div>
</div>
<div class="a" style="left:1898px;top:574px;width:18px;height:356px;background:#2b2b2b"></div>
<svg class="a" style="left:1901px;top:582px" width="12" height="8" viewBox="0 0 12 8"><path d="M0 7.5H12L6 0.5Z" fill="#a0a0a0"/></svg>
<div class="a" style="left:1902px;top:672px;width:12px;height:230px;border-radius:6px;background:#a0a0a0"></div>
<svg class="a" style="left:1901px;top:913px" width="12" height="8" viewBox="0 0 12 8"><path d="M0 0.5H12L6 7.5Z" fill="#a0a0a0"/></svg>
<div class="a" style="left:1130px;top:930px;width:786px;height:22px;background:#2b2b2b"></div>
<svg class="a" style="left:1137px;top:934px" width="9" height="14" viewBox="0 0 9 14"><path d="M8.5 0L0.5 7L8.5 14Z" fill="#a0a0a0"/></svg>
<div class="a" style="left:1183px;top:935px;width:478px;height:13px;border-radius:7px;background:#cfcfcf"></div>
<svg class="a" style="left:1882px;top:934px" width="9" height="14" viewBox="0 0 9 14"><path d="M0.5 0L8.5 7L0.5 14Z" fill="#a0a0a0"/></svg>
<div class="a" style="left:828px;top:952px;width:1088px;height:42px;background:#353a4d;border-top:1px solid #4b5066"></div>
<div class="a" style="left:828px;top:993px;width:1088px;height:1px;background:#4b5066"></div>
<svg class="a" style="left:848px;top:964px" width="8" height="20" viewBox="0 0 8 20"><circle cx="4" cy="3" r="2.3" fill="#d0d2dc"/><circle cx="4" cy="10" r="2.3" fill="#d0d2dc"/><circle cx="4" cy="17" r="2.3" fill="#d0d2dc"/></svg>
<div class="a nw dtab" style="left:885px;top:965px;color:#d0d2dc">Console</div>
<div class="a nw dtab" style="left:981px;top:965px;color:#a9b9ff">What's new</div>
<div class="a nw dtab" style="left:1120px;top:965px;color:#d0d2dc">AI assistance</div>
<div class="a nw dtab" style="left:1298px;top:965px;color:#d0d2dc;letter-spacing:0.9px">Autofill</div>
<svg class="a" style="left:1081px;top:966px" width="13" height="13" viewBox="0 0 13 13"><path d="M1 1L12 12M12 1L1 12" stroke="#c8ccdc" stroke-width="1.7"/></svg>
<div class="a" style="left:966px;top:991px;width:140px;height:3px;border-radius:3px 3px 0 0;background:#a9b9ff"></div>
<svg class="a" style="left:1231px;top:966px" width="17" height="16" viewBox="0 0 17 16"><path d="M5.5 1H11.5M6.5 1V6L1.5 14.5H15.5L10.5 6V1" fill="none" stroke="#d0d2dc" stroke-width="1.7" stroke-linejoin="round"/></svg>
<svg class="a" style="left:1889px;top:966px" width="16" height="15" viewBox="0 0 16 15"><path d="M1 0.5L15 14.5M15 0.5L1 14.5" stroke="#d0d2dc" stroke-width="1.8"/></svg>
<div class="a" style="left:828px;top:994px;width:1070px;height:26px;background:#3c3c42"></div>
<div class="a" style="left:1898px;top:994px;width:18px;height:26px;background:#2b2b2b"></div>
<svg class="a" style="left:1902px;top:997px" width="12" height="22" viewBox="0 0 12 22"><path d="M0 7H12L6 0.5Z" fill="#a0a0a0"/><path d="M0 15H12L6 21.5Z" fill="#a0a0a0"/><path d="M0 9.5H12M0 12.5H12" stroke="#a0a0a0" stroke-width="1"/></svg>
<div class="a" style="left:975px;top:1017px;width:20px;height:6px;border-radius:10px 10px 0 0;background:#2a6ae8"></div>
<div class="a" style="left:828px;top:1020px;width:1088px;height:1px;background:#e8e8e8"></div>

<!-- ============ TASKBAR ============ -->
<div id="tb" class="a" style="left:4px;top:1021px;width:1912px;height:55px;background:#252525"></div>
<svg class="a" style="left:23.5px;top:1037.5px" width="25" height="25" viewBox="0 0 26 26"><path d="M0 3.6L10.6 2.2V12.3H0ZM12 2L26 0V12.3H12ZM0 13.7H10.6V23.8L0 22.4ZM12 13.7H26V26L12 24Z" fill="#fff"/></svg>
<div class="a" style="left:72px;top:1021px;width:431px;height:55px;background:#f0f0f0;border-top:1px solid #bdbdbd;border-left:2px solid #7a7a7a"></div>
<svg class="a" style="left:89px;top:1037px" width="26" height="26" viewBox="0 0 26 26"><circle cx="16" cy="9.5" r="7.8" fill="none" stroke="#111" stroke-width="1.8"/><path d="M10.5 15L1.5 24.5" stroke="#111" stroke-width="1.9"/></svg>
<div class="a nw" style="left:132px;top:1039.5px;font-size:22.2px;color:#1a1a1a">Type here to search</div>
<!-- illustration -->
<svg class="a" style="left:408px;top:1022px" width="95" height="54" viewBox="0 0 95 54">
 <path d="M15 54L22 42Q30 38 38 38L46 40Q56 46 61 54Z" fill="#5b9ad8"/>
 <path d="M22 42Q28 40 34 39L38 46L30 54H19Z" fill="#eef0f2"/>
 <path d="M10 14Q9 30 13 38Q17 46 24 48Q32 47 38 42Q42 36 42 28Q44 20 40 12Q33 5 22 6Q12 7 10 14Z" fill="#eccab2"/>
 <path d="M19 40Q24 38 29 40Q24 42 19 40Z" fill="#c89a80"/>
 <path d="M4 13Q4 3 16 1Q28 0 36 5Q44 11 45 24Q43 28 41 27Q40 18 34 14Q26 11 18 11Q10 13 8 20Q4 18 4 13Z" fill="#e6d8c0"/>
 <ellipse cx="13.2" cy="23.3" rx="4.8" ry="4.2" fill="none" stroke="#555a60" stroke-width="1.4"/>
 <ellipse cx="23.8" cy="22.5" rx="4.3" ry="4.3" fill="none" stroke="#555a60" stroke-width="1.4"/>
 <path d="M18 22.5H19.5M28 21.5L37 22.5" stroke="#555a60" stroke-width="1.3"/>
 <path d="M68 54V18.5Q68 17 71.5 17Q75 17 75 18.5V54Z" fill="#f0a030"/>
 <path d="M68 21H75M68 24H75M68 50H75" stroke="#6a3a10" stroke-width="0.8"/>
 <path d="M76 54V16.5Q76 15 79.5 15Q83 15 83 16.5V54Z" fill="#d42e28"/>
 <path d="M79.5 19L77.5 22.5H81.5Z M79.5 52L77.5 48.5H81.5Z" fill="#f0c060"/>
 <path d="M83.5 54V16.5Q83.5 15 87.2 15Q91 15 91 16.5V54Z" fill="#2a90a0"/>
 <path d="M85 20L89 26L85 32L89 38L85 44L89 50" fill="none" stroke="#d8b860" stroke-width="1.2"/>
</svg>
<!-- task view -->
<svg class="a" style="left:526px;top:1037px" width="28" height="25" viewBox="0 0 28 25"><g fill="none" stroke="#fff" stroke-width="1.5"><path d="M2.5 0.5V4H17.5V0.5"/><rect x="2.5" y="7.3" width="15" height="10.2"/><path d="M2.5 24.5V20.5H17.5V24.5"/><path d="M24.5 0.5V24.5"/></g><rect x="23" y="7.8" width="3" height="3" fill="#fff"/></svg>
<!-- copilot -->
<svg class="a" style="left:600px;top:1035px" width="34" height="31" viewBox="0 0 34 31"><defs>
<linearGradient id="cpl" x1="0" y1="0" x2="0" y2="1"><stop offset="0" stop-color="#18a4f4"/><stop offset="0.5" stop-color="#40b070"/><stop offset="1" stop-color="#f8c800"/></linearGradient>
<linearGradient id="cpr" x1="0" y1="0" x2="0" y2="1"><stop offset="0" stop-color="#a850e8"/><stop offset="0.5" stop-color="#ee4f92"/><stop offset="1" stop-color="#fca050"/></linearGradient></defs>
<path d="M8.5 0.5H22Q26 0.5 25 4.5L19.5 21Q18.5 23 15.5 23H4Q0 23 1.2 19L6 3.5Q7 0.5 8.5 0.5Z" fill="url(#cpl)"/>
<path d="M19 0.5H22Q26 0.5 25 4.5L24.5 6.5H16Z" fill="#1848d0"/>
<path d="M15 6.5H30Q34 6.5 33 10.5L27.5 27Q26.5 30 23.5 30H11Q7.5 30 8.5 26.5L13 9Q14 6.5 15 6.5Z" fill="url(#cpr)"/>
<path d="M9.5 23H15.5L13.5 30H11Q7.5 30 8.5 26.5Z" fill="#e85030"/>
<path d="M13 12L16.5 12L13.5 23H10.5Z" fill="#252525"/>
</svg>
<!-- file explorer -->
<svg class="a" style="left:675px;top:1036px" width="34" height="27" viewBox="0 0 34 27"><path d="M0 3Q0 0 3 0H12L15 3H31Q34 3 34 6V24Q34 27 31 27H3Q0 27 0 24Z" fill="#f0b820"/><path d="M0 8H34V24Q34 27 31 27H3Q0 27 0 24Z" fill="#ffd050"/><path d="M8 15H26V27H21V19H13V27H8Z" fill="#2a7ad8"/></svg>
<!-- visual studio -->
<svg class="a" style="left:748px;top:1032px" width="37" height="36" viewBox="0 0 37 36"><path d="M26 0L37 5V31L26 36L10 21L4 26L0 24V12L4 10L10 15ZM26 10L17 18L26 26Z" fill="#9a6ae8"/><path d="M26 0L37 5V31L26 36Z" fill="#b088f0"/><path d="M0 12L4 10L10 15L6 18Z" fill="#7040c8"/></svg>
<!-- chrome active -->
<div class="a" style="left:806px;top:1021px;width:73px;height:55px;background:#555555"></div>
<svg class="a" style="left:823px;top:1032px" width="37" height="37" viewBox="0 0 36 36"><circle cx="18" cy="18" r="17.5" fill="#dd4b3e"/><path d="M18 18L33.2 9.25A17.5 17.5 0 0 1 18 35.5Z" fill="#ffcd40"/><path d="M18 18L18 35.5A17.5 17.5 0 0 1 2.8 9.25Z" fill="#1da462"/><circle cx="18" cy="18" r="8" fill="#fff"/><circle cx="18" cy="18" r="6.3" fill="#4a8af4"/></svg>
<svg class="a" style="left:839px;top:1047px" width="24" height="24" viewBox="0 0 31 31"><defs><clipPath id="avc2"><circle cx="15.5" cy="15.5" r="15.5"/></clipPath></defs><g clip-path="url(#avc2)"><rect width="31" height="31" fill="#9ec4ec"/><path d="M16 0H31V31H20Z" fill="#c4dcf4"/><path d="M2 31Q1 14 6 7Q10 2 15 3Q21 4 22 11Q23 20 19 31Z" fill="#2a1410"/><ellipse cx="15.5" cy="14" rx="5" ry="6.5" fill="#c87060"/><path d="M10 10Q13 5 18 6Q21 8 21 11Q17 8 10 10Z" fill="#2a1410"/><path d="M8 31Q10 22 15 22Q21 22 24 31Z" fill="#3a6ab8"/></g></svg>
<!-- postman -->
<div class="a" style="left:899px;top:1032px;width:36px;height:36px;border-radius:50%;background:#ff6c37"></div>
<svg class="a" style="left:905px;top:1038px" width="24" height="24" viewBox="0 0 24 24"><circle cx="20.3" cy="3.6" r="2.6" fill="#fff"/><path d="M17 5.2L6.8 12.6L12 14.6L19.2 8.6Z" fill="#fff"/><path d="M10.5 14.8L1.8 21.6L4.2 22.2L13.2 16.6Z" fill="#fff"/></svg>
<!-- mysql -->
<div class="a" style="left:975px;top:1033px;width:34px;height:34px;border-radius:4px;background:#2e6a90"></div>
<svg class="a" style="left:977px;top:1035px" width="30" height="30" viewBox="0 0 30 30"><path d="M3 7Q8 3 13 8Q16 12 17 18Q18 24 24 27Q18 25 15 20Q13 16 10 12Q7 9 3 9Z" fill="none" stroke="#dce8f0" stroke-width="1.3"/><path d="M20 3L26 9M24 3L26 5" stroke="#dce8f0" stroke-width="1.6"/></svg>
<!-- chrome 2 -->
<svg class="a" style="left:1049px;top:1032px" width="36" height="36" viewBox="0 0 36 36"><circle cx="18" cy="18" r="17.5" fill="#dd4b3e"/><path d="M18 18L33.2 9.25A17.5 17.5 0 0 1 18 35.5Z" fill="#ffcd40"/><path d="M18 18L18 35.5A17.5 17.5 0 0 1 2.8 9.25Z" fill="#1da462"/><circle cx="18" cy="18" r="8" fill="#fff"/><circle cx="18" cy="18" r="6.3" fill="#4a8af4"/></svg>
<div class="a" style="left:1064px;top:1047px;width:24px;height:24px;border-radius:50%;background:#a540c8;color:#fff;font-size:15px;text-align:center;line-height:24px">S</div>
<!-- teams -->
<svg class="a" style="left:1123px;top:1033px" width="36" height="33" viewBox="0 0 36 33"><circle cx="27" cy="6" r="4.5" fill="#7b83eb"/><path d="M20 12H35V22Q35 28 28 28Q22 28 20 24Z" fill="#7b83eb"/><circle cx="18" cy="5" r="5" fill="#5059c9"/><path d="M10 11H26V24Q26 32 18 32Q10 32 10 24Z" fill="#5059c9"/><rect x="0" y="8" width="18" height="18" rx="2" fill="#4b53bc"/><path d="M4 12H14M9 12V23" stroke="#fff" stroke-width="2.6"/></svg>
<div class="a" style="left:1139px;top:1048px;width:24px;height:24px;border-radius:50%;background:#c42b1c;color:#fff;font-size:17px;text-align:center;line-height:24px">4</div>
<!-- weather -->
<svg class="a" style="left:1250px;top:1033px" width="40" height="35" viewBox="0 0 40 35"><path d="M8 33Q0 33 0 26Q0 20 7 19Q8 11 17 11Q24 11 27 17Q36 16 37 25Q37 33 29 33Z" fill="#b8d8f8"/><path d="M8 33Q0 33 0 27Q3 30 10 30H30Q36 30 37 26Q37 33 29 33Z" fill="#88b0e8"/></svg>
<div class="a" style="left:1268px;top:1032px;width:18px;height:18px;border-radius:50%;background:#c42b1c;color:#fff;font-size:12px;text-align:center;line-height:18px">1</div>
<div class="a nw" style="left:1299px;top:1041px;font-size:20px;color:#fff">32°C</div>
<svg class="a" style="left:1386px;top:1044px" width="20" height="12" viewBox="0 0 20 12"><path d="M1 11L10 2L19 11" fill="none" stroke="#fff" stroke-width="1.6"/></svg>
<svg class="a" style="left:1435px;top:1037px" width="18" height="26" viewBox="0 0 18 26"><rect x="3.5" y="1" width="11" height="17" rx="5.5" fill="#fff"/><path d="M1 13Q1 20 9 20Q17 20 17 13M9 20V24M5 24.5H13" fill="none" stroke="#fff" stroke-width="1.3"/></svg>
<svg class="a" style="left:1479px;top:1041px" width="26" height="16" viewBox="0 0 26 16"><rect x="5" y="4" width="18" height="11" fill="none" stroke="#fff" stroke-width="1.4"/><rect x="7" y="6" width="14" height="7" fill="#fff"/><rect x="23" y="7" width="2.5" height="5" fill="#fff"/><path d="M2 1V5M5 1V5M0.5 5H6.5V7Q6.5 9 3.5 9V11" fill="none" stroke="#fff" stroke-width="1.2"/></svg>
<svg class="a" style="left:1528px;top:1039px" width="24" height="21" viewBox="0 0 24 21"><path d="M1 7H5L11 1.5V19.5L5 14H1Z" fill="none" stroke="#fff" stroke-width="1.4"/><path d="M14 7Q16 10.5 14 14M17 4.5Q21 10.5 17 16.5M20 2Q25.5 10.5 20 19" fill="none" stroke="#fff" stroke-width="1.4"/></svg>
<svg class="a" style="left:1579px;top:1037px" width="20" height="27" viewBox="0 0 20 27"><rect x="1" y="8" width="11" height="11" rx="1.5" fill="none" stroke="#fff" stroke-width="1.4"/><path d="M12 11L18 8V19L12 16" fill="none" stroke="#fff" stroke-width="1.4"/><path d="M3 4Q10 0 17 4M3 23Q10 27 17 23" fill="none" stroke="#fff" stroke-width="1.3"/></svg>
<svg class="a" style="left:1631px;top:1036px" width="23" height="27" viewBox="0 0 23 27"><path d="M4 25L18 3Q20 1 21 3Q22 5 20 7L7 24Z" fill="none" stroke="#fff" stroke-width="1.4"/><path d="M1 18Q8 12 12 16Q15 19 22 14" fill="none" stroke="#fff" stroke-width="1.4"/></svg>
<div class="a nw" style="left:1683px;top:1040px;font-size:20px;color:#fff;transform:scaleX(0.83);transform-origin:0 0">ENG</div>
<div class="a nw" style="left:1762px;top:1026px;font-size:18.4px;color:#fff;transform:scaleX(0.92);transform-origin:0 0">15:35</div>
<div class="a nw" style="left:1737px;top:1054px;font-size:18.2px;color:#fff">13-06-2025</div>
<svg class="a" style="left:1857px;top:1037px" width="27" height="27" viewBox="0 0 27 27"><path d="M1 1H25V19H12L7 24V19H1Z" fill="#fff"/><path d="M5 6H21M5 10H21M5 14H15" stroke="#232323" stroke-width="1.4"/><circle cx="20" cy="20" r="5.5" fill="#232323"/><path d="M22.5 16.5A4 4 0 1 0 23.5 22A3 3 0 0 1 22.5 16.5Z" fill="#fff"/></svg>
<div class="a" style="left:1912px;top:1021px;width:1px;height:55px;background:#888"></div>

</body></html>
